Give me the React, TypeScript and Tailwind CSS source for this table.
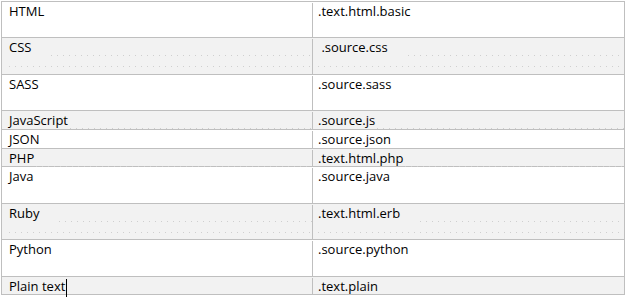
import React from "react";

type Row = { a: string; b: string; h: number; gray: boolean; dots?: "two" | "one" };

const rows: Row[] = [
  { a: "HTML", b: ".text.html.basic", h: 36, gray: false },
  { a: "CSS", b: " .source.css", h: 37, gray: true, dots: "two" },
  { a: "SASS", b: ".source.sass", h: 36, gray: false },
  { a: "JavaScript", b: ".source.js", h: 19, gray: true, dots: "one" },
  { a: "JSON", b: ".source.json", h: 19, gray: false },
  { a: "PHP", b: ".text.html.php", h: 18, gray: true, dots: "one" },
  { a: "Java", b: ".source.java", h: 37, gray: false },
  { a: "Ruby", b: ".text.html.erb", h: 36, gray: true, dots: "two" },
  { a: "Python", b: ".source.python", h: 37, gray: false },
  { a: "Plain text", b: ".text.plain", h: 18, gray: true },
];

const dotLine = "h-px bg-[repeating-linear-gradient(90deg,#cfcfcf_0_1px,transparent_1px_6px)]";

function Cell({ text, first, caret, dots }: { text: string; first?: boolean; caret?: boolean; dots?: "two" | "one" }) {
  return (
    <div
      className={
        first
          ? "relative w-[311px] shrink-0 border-r border-[#bfbfbf] pl-[7px]"
          : "relative flex-1 pl-[5px]"
      }
    >
      <div className="flex items-start h-[17px]">
        <span className="whitespace-pre leading-[17px] text-[13px] text-black">{text}</span>
        {caret && <span className="ml-px mt-[1px] h-[19px] w-px bg-black" />}
        {dots === "one" && <span className={"flex-1 self-end ml-[2px] " + dotLine} />}
        {dots === "two" && <span className={"flex-1 mt-[16px] ml-[20px] " + dotLine} />}
      </div>
      {dots === "two" && <div className={"mt-[10px] " + dotLine} />}
    </div>
  );
}

export default function App() {
  return (
    <div className="w-[628px] h-[297px] bg-white overflow-hidden" style={{ fontFamily: '"Open Sans", "Noto Sans", sans-serif' }}>
      <div className="ml-px mt-px w-[624px] border-l border-r border-b border-[#bfbfbf]">
        {rows.map((r, i) => (
          <div
            key={i}
            className={"flex border-t border-[#bfbfbf] pt-[1px] " + (r.gray ? "bg-[#f2f2f2]" : "bg-white")}
            style={{ height: r.h }}
          >
            <Cell text={r.a} first caret={r.a === "Plain text"} dots={r.dots} />
            <Cell text={r.b} dots={r.dots} />
          </div>
        ))}
      </div>
    </div>
  );
}
